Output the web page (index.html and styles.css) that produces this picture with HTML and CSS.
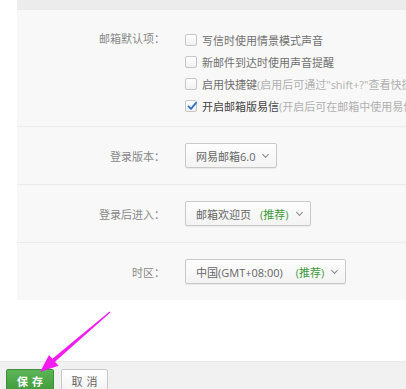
FILE: index.html
```html
<!DOCTYPE html>
<html lang="zh-CN">
<head>
    <meta charset="UTF-8">
    <meta name="viewport" content="width=device-width, initial-scale=1.0">
    <title>邮箱设置</title>
    <link rel="stylesheet" href="styles.css">
</head>
<body>
    <div class="topbar"></div>
    <div class="panel">
        <div class="section first">
            <div class="label">邮箱默认项：</div>
            <div class="options">
                <label class="option"><span class="box"></span>写信时使用情景模式声音</label>
                <label class="option"><span class="box"></span>新邮件到达时使用声音提醒</label>
                <label class="option"><span class="box"></span>启用快捷键<span class="hint">(启用后可通过"shift+?"查看快捷键)</span></label>
                <label class="option on"><span class="box">
                    <svg width="12" height="12" viewBox="0 0 12 12"><path d="M2.5 6.3 L5 8.8 L10 2.8" fill="none" stroke="#2b6fcf" stroke-width="1.8" stroke-linecap="round" stroke-linejoin="round"/></svg>
                </span>开启邮箱版易信<span class="hint">(开启后可在邮箱中使用易信收发消息)</span></label>
            </div>
        </div>
        <div class="section">
            <div class="label">登录版本：</div>
            <div class="select">网易邮箱6.0<span class="caret"></span></div>
        </div>
        <div class="section">
            <div class="label">登录后进入：</div>
            <div class="select">邮箱欢迎页<span class="rec">(推荐)</span><span class="caret"></span></div>
        </div>
        <div class="section">
            <div class="label">时区：</div>
            <div class="select">中国(GMT+08:00)<span class="rec wide">(推荐)</span><span class="caret"></span></div>
        </div>
    </div>
    <div class="footer">
        <button class="btn save">保存</button>
        <button class="btn cancel">取消</button>
    </div>

    <!-- annotation arrow -->
    <svg class="arrow" width="406" height="389" viewBox="0 0 406 389">
        <polygon points="40,372 49,355 52.4,358.8 109.6,311.5 110.4,312.5 55,361.8 58.5,365.8" fill="#f21cf0"/>
    </svg>
</body>
</html>
```

FILE: styles.css
```css
body {
    margin: 0;
    width: 406px;
    height: 389px;
    overflow: hidden;
    background: #fff;
    font-family: "Open Sans", "Noto Sans CJK SC", sans-serif;
    font-size: 11px;
    color: #555;
    position: relative;
}
.topbar {
    height: 10px;
    margin-left: 17px;
    background: #ececec;
}
.panel {
    margin-left: 17px;
    background: #f8f8f8;
    overflow: hidden;
}
.section {
    display: flex;
    align-items: center;
    height: 58px;
    border-top: 1px solid #ebebeb;
    box-sizing: border-box;
}
.section.first {
    height: 116px;
    align-items: flex-start;
    border-top: none;
    padding-top: 19px;
}
.label {
    width: 148px;
    text-align: right;
    color: #888;
    flex-shrink: 0;
    margin-right: 20px;
}
.first .label {
    line-height: 22px;
    margin-top: -1px;
}
.options {
    display: flex;
    flex-direction: column;
    white-space: nowrap;
    min-width: 0;
}
.option {
    display: flex;
    align-items: center;
    height: 22px;
    color: #707070;
}
.option.on {
    color: #444;
}
.box {
    width: 12px;
    height: 12px;
    border: 1px solid #c6c6c6;
    border-radius: 2px;
    background: linear-gradient(#fff, #f1f1f1);
    box-sizing: border-box;
    margin-right: 5px;
    display: flex;
    align-items: center;
    justify-content: center;
    position: relative;
    flex-shrink: 0;
}
.box svg {
    position: absolute;
    left: 0;
    top: -1px;
}
.hint {
    color: #b0b0b0;
}
.select {
    display: flex;
    align-items: center;
    height: 25px;
    box-sizing: border-box;
    padding: 0 8px 0 10px;
    border: 1px solid #c9c9c9;
    border-radius: 2px;
    background: linear-gradient(#fefefe, #f3f3f3);
    box-shadow: 0 1px 1px rgba(0, 0, 0, 0.06);
    color: #666;
    white-space: nowrap;
}
.rec {
    color: #3e9a3a;
    margin-left: 9px;
}
.rec.wide {
    margin-left: 13px;
}
.caret {
    width: 4px;
    height: 4px;
    border-right: 1px solid #888;
    border-bottom: 1px solid #888;
    transform: rotate(45deg);
    margin: -3px 0 0 8px;
}
.footer {
    position: absolute;
    left: 0;
    right: 0;
    top: 361px;
    height: 28px;
    background: #f1f1f1;
    border-top: 1px solid #e6e6e6;
    box-sizing: border-box;
    display: flex;
    align-items: flex-start;
    gap: 7px;
    padding: 7px 0 0 6px;
}
.btn {
    height: 24px;
    width: 48px;
    font-family: "Noto Sans CJK SC", sans-serif;
    font-size: 11px;
    letter-spacing: 4px;
    padding: 0 0 0 4px;
    border-radius: 2px;
    cursor: pointer;
}
.save {
    background: linear-gradient(#5cb556, #3f9a3a);
    border: 1px solid #3d8f37;
    color: #fff;
    font-weight: bold;
}
.cancel {
    width: 47px;
    background: linear-gradient(#fff, #f2f2f2);
    border: 1px solid #c8c8c8;
    color: #666;
}
.arrow {
    position: absolute;
    left: 0;
    top: 0;
    pointer-events: none;
}
```
